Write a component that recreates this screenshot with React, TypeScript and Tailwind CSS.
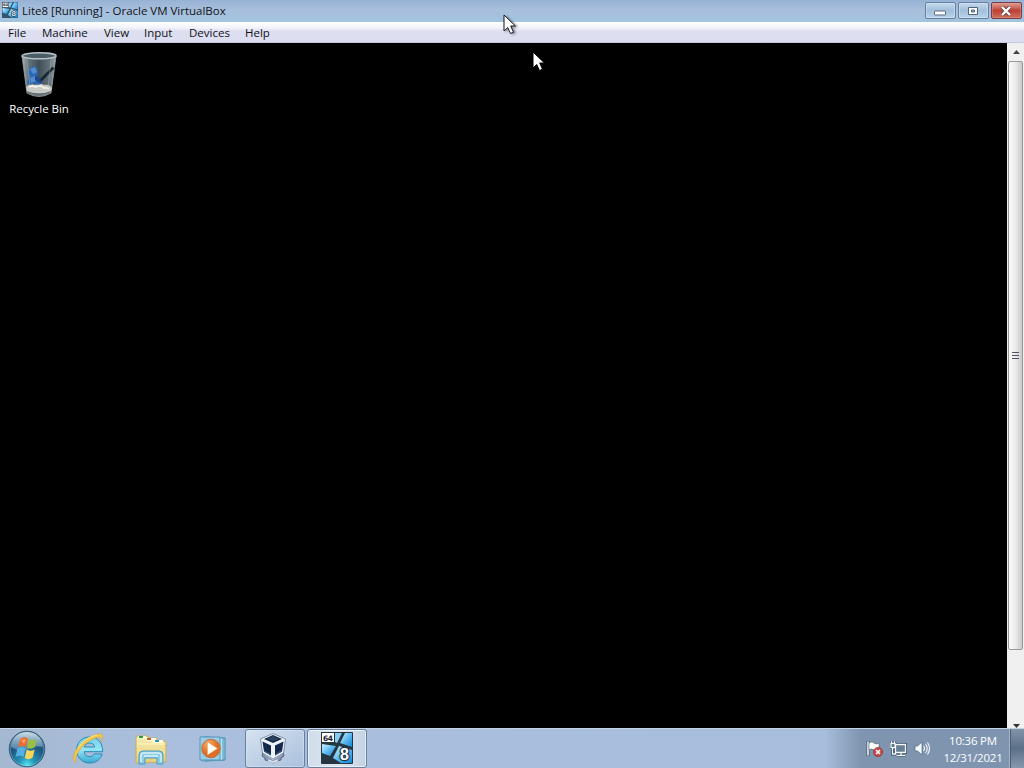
import React from 'react';

const menus = [
  { label: 'File', width: 34 },
  { label: 'Machine', width: 62 },
  { label: 'View', width: 40 },
  { label: 'Input', width: 45 },
  { label: 'Devices', width: 56 },
  { label: 'Help', width: 40 },
];

function GuestIcon({ size, small = false }: { size: number; small?: boolean }) {
  return (
    <svg width={size} height={size} viewBox="0 0 32 32" className="block shrink-0">
      <defs>
        <linearGradient id={small ? 'paneS' : 'paneL'} x1="0" y1="0" x2="1" y2="1">
          <stop offset="0" stopColor="#d3f2ff" />
          <stop offset=".5" stopColor="#5ebbf2" />
          <stop offset="1" stopColor="#1684d2" />
        </linearGradient>
      </defs>
      <rect width="32" height="32" rx="1" fill={small ? '#34536c' : '#263641'} />
      <path d="M1 12 15 14 9 24 1 21Z" fill={small ? 'url(#paneS)' : 'url(#paneL)'} />
      <path d="M14 1H21L16 11 14 10Z" fill="#83cdf5" />
      <path d="M24 1H31V15L19 11Z" fill={small ? 'url(#paneS)' : 'url(#paneL)'} />
      <path d="M18 14 31 18V31H20L12 26Z" fill={small ? 'url(#paneS)' : 'url(#paneL)'} />
      <rect x=".5" y=".5" width="13" height="10" fill="#fff" stroke="#263641" />
      <text x="2" y="8.5" fontFamily="DejaVu Sans, sans-serif" fontWeight="700" fontSize="7.5" textLength="10" fill="#18212a">64</text>
      <text x="19" y="28" fontFamily="Liberation Sans, sans-serif" fontWeight="700" fontSize="16" fill={small ? '#d7eaf5' : '#fff'} stroke="#203442" strokeWidth="2.5" paintOrder="stroke">8</text>
    </svg>
  );
}

function RecycleBin() {
  return (
    <svg width="36" height="46" viewBox="0 0 36 46" className="block">
      <defs>
        <linearGradient id="glass">
          <stop offset="0" stopColor="#a8b3b9" />
          <stop offset=".18" stopColor="#65737b" />
          <stop offset=".5" stopColor="#3f4f5a" />
          <stop offset=".8" stopColor="#626f76" />
          <stop offset="1" stopColor="#9baab1" />
        </linearGradient>
      </defs>
      <path d="M1 4 6 41Q18 48 30 41L35 4Z" fill="url(#glass)" stroke="#9aa6ac" strokeWidth=".8" />
      <path d="M5 35q4-4 9-2 5-3 9 0 5-1 8 3l-1 3q-12 5-24 0Z" fill="#c9c9c5" />
      <path d="M8 35q3-2 7 0 4-3 8 1 3-1 5 1" stroke="#efefea" fill="none" strokeWidth="2" />
      <path d="M6 40q12 5 24 0v1q-12 6-24 0Z" fill="#787f81" />
      <path d="m34 16-13 13-3 2 1-4 12-12Z" fill="#182630" />
      <path d="m9 16 4-2 3 3 1 5-2 2 4 3 1 5-3 1-4-2-4 2-3-2 2-5 2-2-3-2Z" fill="#2868b4" />
      <path d="m9 17 5-2 2 5-4 2Zm0 9 5-2 1 5-5 2Z" fill="#568bd0" />
      <path d="m14 24 5 2 1 6-6-4Z" fill="#1c438b" />
      <path d="m6 8 3 26M30 8l-3 28" stroke="#b6c3c9" strokeOpacity=".4" fill="none" />
      <ellipse cx="18" cy="3.8" rx="17" ry="3" fill="#4a5c66" stroke="#b6c1c7" strokeWidth="1.5" />
    </svg>
  );
}

function StartOrb() {
  return (
    <svg width="38" height="38" viewBox="0 0 38 38" className="block">
      <defs>
        <radialGradient id="orb" cx=".5" cy=".95" r=".9">
          <stop offset="0" stopColor="#54e6ee" />
          <stop offset=".25" stopColor="#2596b8" />
          <stop offset=".6" stopColor="#205a84" />
          <stop offset="1" stopColor="#24516f" />
        </radialGradient>
        <linearGradient id="orbShine" x2="0" y2="1">
          <stop stopColor="#e2eff5" stopOpacity=".9" />
          <stop offset="1" stopColor="#79a5c4" stopOpacity=".5" />
        </linearGradient>
      </defs>
      <circle cx="19" cy="19" r="17.8" fill="url(#orb)" stroke="#355b75" />
      <path d="M3 17C4-3 34-3 35 17Q27 15 20 19T3 17Z" fill="url(#orbShine)" />
      <path d="M12.5 9q3-3 7.5-.5L18 17q-4-2.5-8 0Z" fill="#ee6b2c" />
      <path d="M21 9q4 2.5 8 0l-2 8q-4 3-8 .5Z" fill="#99bf42" />
      <path d="M9.5 18.5q4-2.5 8 0l-2 8.5q-4-2.5-8 0Z" fill="#55b0e3" />
      <path d="M18.7 19.5q4 2.5 8 0l-2 8q-4 3-8 .5Z" fill="#fbd45b" />
      <path d="m13 10 5-1-2 5Z" fill="#ffb16c" opacity=".7" />
      <circle cx="19" cy="19" r="16.8" fill="none" stroke="#b4dceb" strokeOpacity=".5" strokeWidth=".7" />
    </svg>
  );
}

function Folder() {
  return (
    <svg width="34" height="32" viewBox="0 0 34 32" className="block">
      <defs><linearGradient id="folder" x2="0" y2="1"><stop stopColor="#f7edb0" /><stop offset="1" stopColor="#e6cf7b" /></linearGradient></defs>
      <path d="M2 29V4q0-2 2-2h9l2 2h8v3h7q2 0 2 2v19Z" fill="url(#folder)" stroke="#caad5d" />
      <path d="M4 2h8v3H4Z" fill="#f9f8cf" /><path d="M5 2h4v2H5Z" fill="#279a41" />
      <path d="M12 4h10v3H12Z" fill="#fffbe0" /><path d="M13 4h4v2h-4Z" fill="#c75932" />
      <path d="M19 6h10v3H19Z" fill="#fffbe0" /><path d="M21 6h4v2h-4Z" fill="#2a95ab" />
      <path d="M3 10h27" stroke="#fff5bb" strokeWidth="1.2" />
      <path d="M5 30V21q0-4 4-4h16q4 0 4 4v9h-6v-6H11v6Z" fill="#8acce6" stroke="#4d9bbd" />
      <path d="M7 28v-7q0-2 3-2h14q3 0 3 2v7M10 22h14" fill="none" stroke="#d7f2fa" strokeWidth="1.4" />
    </svg>
  );
}

function InternetExplorer() {
  return (
    <svg width="32" height="34" viewBox="0 0 32 34" className="block">
      <defs><linearGradient id="edgeBlue" x2="0" y2="1"><stop stopColor="#74cee9" /><stop offset=".5" stopColor="#94e5f5" /><stop offset="1" stopColor="#36a6d1" /></linearGradient></defs>
      <path fillRule="evenodd" d="M16.5 5C8.7 5 3.7 10.7 3.7 18s5.4 13 13 13c6.4 0 11-3.5 12.5-9H21c-.9 1.8-2.3 2.7-4.6 2.7-3.3 0-5-1.9-5.2-5h18.5C29.7 10.3 24.7 5 16.5 5ZM11.4 15c.7-2.7 2.4-4 5.2-4 2.8 0 4.8 1.4 5.1 4Z" fill="url(#edgeBlue)" stroke="#258cba" />
      <path d="M3 31C-5 26 7 6 25 2c5-1 6 2 3 8 1-5-1-6-5-4C10 10 1 23 3 31Z" fill="#f2c74b" stroke="#cda133" strokeWidth=".5" />
      <path d="M5 17C8 10 15 5 24 3" fill="none" stroke="#fff098" strokeWidth=".8" />
    </svg>
  );
}

function MediaPlayer() {
  return (
    <svg width="30" height="30" viewBox="0 0 30 30" className="block">
      <defs><radialGradient id="orange" cx=".35" cy=".25"><stop stopColor="#f7ad6b" /><stop offset="1" stopColor="#df6d22" /></radialGradient></defs>
      <path d="m6 3 20 1v22l-20 1Z" fill="#9bd5e9" stroke="#4087ab" />
      <path d="m3 3 21 1v22l-21 1Z" fill="#b9e2ef" stroke="#559bbb" />
      <path d="M1 3h20v23H1Z" fill="#9acde7" stroke="#5797b9" />
      <circle cx="12" cy="14.5" r="9.3" fill="url(#orange)" stroke="#bb754a" />
      <path d="m8.5 8 10 6.5-10 6.5Z" fill="#fffdf7" stroke="#e1a473" strokeWidth=".5" />
    </svg>
  );
}

function VirtualBoxIcon() {
  return (
    <svg width="32" height="34" viewBox="0 0 32 34" className="block">
      <path d="m6 21-1 4 3 2v2l5 1 3 2 3-2 5-1v-2l3-2-1-4" fill="#8999b2" stroke="#526282" />
      <path d="m8 23 8 5 8-5m-13 6 5 2 5-2" fill="none" stroke="#dbe4f0" strokeWidth="1.7" />
      <path d="m3.5 8 12.5-5.5L28.5 8l-2 14L16 28 5.5 22Z" fill="#edf5fa" stroke="#6c7b91" strokeWidth=".8" />
      <path d="m7 8 9-4 9 4-9 4Z" fill="#192b4a" />
      <path d="m5.5 10.5 8.5 4v10L7 20.5Zm21 0-8.5 4v10l7-4Z" fill="#15294d" />
      <path d="m10 8 6-3 6 3-6 2Z" fill="#294461" />
      <path d="m7 19 7 4v1.5l-7-4Zm18 0-7 4v1.5l7-4Z" fill="#32577c" />
    </svg>
  );
}

function TrayIcon({ kind }: { kind: 'action' | 'network' | 'sound' }) {
  return (
    <svg width="17" height="17" viewBox="0 0 17 17" className="block" fill="none">
      {kind === 'action' ? (
        <><path d="M2 1v15" stroke="#3f5467" strokeWidth="3" /><path d="M2 1.5v14" stroke="white" strokeWidth="1.5" /><path d="M3 3q3-2 5 0t5 0v7q-3 2-5 0T3 10Z" fill="white" stroke="#496173" strokeWidth=".6" /><circle cx="12" cy="12" r="4.6" fill="#cc4742" stroke="#842e34" strokeWidth=".6" /><path d="m10 10 4 4m0-4-4 4" stroke="#fff" strokeWidth="1.6" /></>
      ) : kind === 'network' ? (
        <><path d="M5.5 4.5h10v8h-10ZM7 15.5h8M11 12v3M1 3.5h4v4H1ZM2.5 8v6H6M1.5 1v3M4.5 1v3" stroke="#344c62" strokeWidth="2.8" /><path d="M6 5h9v7H6Z" fill="#667f93" /><path d="M5.5 4.5h10v8h-10ZM7 15.5h8M11 12v3M1 3.5h4v4H1ZM2.5 8v6H6M1.5 1v3M4.5 1v3" stroke="#f4f8fa" strokeWidth="1.3" /></>
      ) : (
        <><path d="M1 6h2.5L8 2v13l-4.5-4H1Z" fill="#f6fafb" stroke="#4b6478" strokeWidth=".7" /><path d="M9.5 6q2 2.5 0 5M11.5 4q3.5 4.5 0 9M13.5 2.5q4 6 0 12" stroke="#f4f9fb" strokeWidth="1.1" /></>
      )}
    </svg>
  );
}

function Cursor({ outlined = false }: { outlined?: boolean }) {
  return (
    <svg width="14" height="21" viewBox="0 0 14 21" className="block drop-shadow-[2px_1px_1px_#0006]">
      <path d="M1 1v16l3.7-3.5L7.5 19.5l3-1.3L7.7 12H12.5Z" fill="#fff" stroke={outlined ? '#10151b' : '#000'} strokeWidth="1" />
    </svg>
  );
}

function ScrollBar() {
  return (
    <div className="flex w-[17px] shrink-0 flex-col bg-[#f1f0f1] pl-px">
      <div className="flex h-[18px] shrink-0 items-center justify-center">
        <svg width="7" height="4"><path d="M0 4 3.5 0 7 4Z" fill="#444" /></svg>
      </div>
      <div className="flex h-[589px] w-[15px] shrink-0 items-center justify-center rounded-[2px] border border-[#999] bg-linear-to-r from-[#fafafa] from-0% via-[#eeeeef] via-45% to-[#c8c9cc] pr-px">
        <div className="flex w-[7px] flex-col gap-[2px]">
          {[0, 1, 2].map(i => <div key={i} className="h-px bg-[#51545a]" />)}
        </div>
      </div>
      <div className="flex flex-1 items-end justify-center">
        <svg width="7" height="4"><path d="M0 0h7L3.5 4Z" fill="#333" /></svg>
      </div>
    </div>
  );
}

export default function App() {
  return (
    <div className="relative flex h-[768px] w-[1024px] cursor-default flex-col overflow-hidden bg-black font-['Open_Sans','Noto_Sans',sans-serif] text-[11.5px] text-[#111217] select-none">
      <header className="flex h-[22px] shrink-0 items-start bg-linear-to-b from-[#96b2d5] from-0% via-[#a8bfdc] via-45% to-[#a2c4df] to-100% pl-[2px]">
        <div className="mt-[2px]"><GuestIcon size={16} small /></div>
        <span className="ml-[4px] w-[208px] pt-[3px] leading-4 whitespace-nowrap tracking-[-0.01px]">Lite8 [Running] - Oracle VM VirtualBox</span>
        <div className="ml-auto flex gap-[2px] pt-[2px] pr-[2px]">
          <button className="flex h-[17px] w-[31px] items-center justify-center rounded-[2px] border border-[#697f9f] bg-linear-to-b from-[#c4d8eb] via-[#a3bfdc] to-[#b8d5ea] shadow-[inset_0_0_0_1px_#d6e6f388]" aria-label="Minimize">
            <svg width="12" height="6" className="mt-[4px] mr-px"><rect x=".5" y="1" width="11" height="4" rx=".5" fill="#fff" stroke="#5c697a" /></svg>
          </button>
          <button className="flex h-[17px] w-[31px] items-center justify-center rounded-[2px] border border-[#697f9f] bg-linear-to-b from-[#c4d8eb] via-[#a3bfdc] to-[#b8d5ea] shadow-[inset_0_0_0_1px_#d6e6f388]" aria-label="Maximize">
            <svg width="12" height="10" className="mr-px"><path fillRule="evenodd" d="M1.5 1.5h9v7h-9Zm3 2.5v2h3V4Z" fill="#fff" stroke="#536276" /></svg>
          </button>
          <button className="flex h-[17px] w-[31px] items-center justify-center rounded-[2px] border border-[#773b43] bg-linear-to-b from-[#dda093] via-[#bd4034] to-[#cf6e59] shadow-[inset_0_0_0_1px_#e1a39a66]" aria-label="Close">
            <svg width="12" height="10" viewBox="0 0 12 10" className="mr-px"><path d="m2 1 8 8m0-8-8 8" stroke="#664044" strokeWidth="4" /><path d="m2 1 8 8m0-8-8 8" stroke="#fff" strokeWidth="2.4" /></svg>
          </button>
        </div>
      </header>

      <nav className="flex h-[21px] shrink-0 border-b border-[#c6c8df] bg-linear-to-b from-white from-0% via-[#f1f3fa] via-30% to-[#dddff0] to-45% pl-2">
        {menus.map(item => <div key={item.label} className="pt-[3px] leading-4 whitespace-nowrap" style={{ width: item.width }}>{item.label}</div>)}
      </nav>

      <main className="flex h-[685px] shrink-0 bg-black">
        <div className="flex-1 pt-[9px]">
          <div className="flex w-[78px] flex-col items-center text-white">
            <RecycleBin />
            <span className="mt-[3px] leading-4 tracking-[-0.05px] whitespace-nowrap">Recycle Bin</span>
          </div>
        </div>
        <ScrollBar />
      </main>

      <footer className="flex h-10 shrink-0 border-t border-[#c3d2e4] bg-linear-to-r from-[#a5b8d1] from-0% via-[#a9bfdd] via-15% to-[#a6bddb] to-100%">
        <div className="flex w-[58px] items-center pl-[8px]"><StartOrb /></div>
        <div className="flex w-[62px] items-center justify-center"><InternetExplorer /></div>
        <div className="flex w-[62px] items-center justify-center pt-[3px]"><Folder /></div>
        <div className="flex w-[62px] items-center justify-center pl-px"><MediaPlayer /></div>
        <div className="ml-px flex w-[60px] items-center justify-center rounded-[3px] border border-[#687f9d] bg-linear-to-br from-[#d5e2f0] to-[#aac0dc] pr-[4px] pb-[2px] shadow-[inset_0_0_0_1px_#ddebf777]"><VirtualBoxIcon /></div>
        <div className="ml-[2px] flex w-[60px] items-start justify-center rounded-[3px] border border-[#687f9d] bg-linear-to-r from-[#d0ddec] via-[#dce6f1] to-[#c3d2e4] pt-[2px] shadow-[inset_0_0_0_1px_#f4f8fcbb]"><GuestIcon size={32} /></div>
        <div className="ml-auto flex w-[198px] shrink-0 bg-linear-to-r from-[#a6bddb] to-[#7e94af] to-18% text-white">
          <div className="flex w-[112px] items-center gap-[7px] pl-[40px]">
            <TrayIcon kind="action" /><TrayIcon kind="network" /><TrayIcon kind="sound" />
          </div>
          <div className="flex w-[70px] flex-col items-center pt-[3px] leading-[17px] tracking-[-0.2px] whitespace-nowrap"><span>10:36 PM</span><span>12/31/2021</span></div>
          <div className="ml-auto w-[15px] border-l border-[#a3b5c7] bg-linear-to-b from-[#8294a8] via-[#5c7087] to-[#8799ad] shadow-[inset_1px_0_0_#455d77]" />
        </div>
      </footer>

      <div className="pointer-events-none absolute top-[14px] left-[503px]"><Cursor outlined /></div>
      <div className="pointer-events-none absolute top-[51px] left-[532px]"><Cursor /></div>
    </div>
  );
}
